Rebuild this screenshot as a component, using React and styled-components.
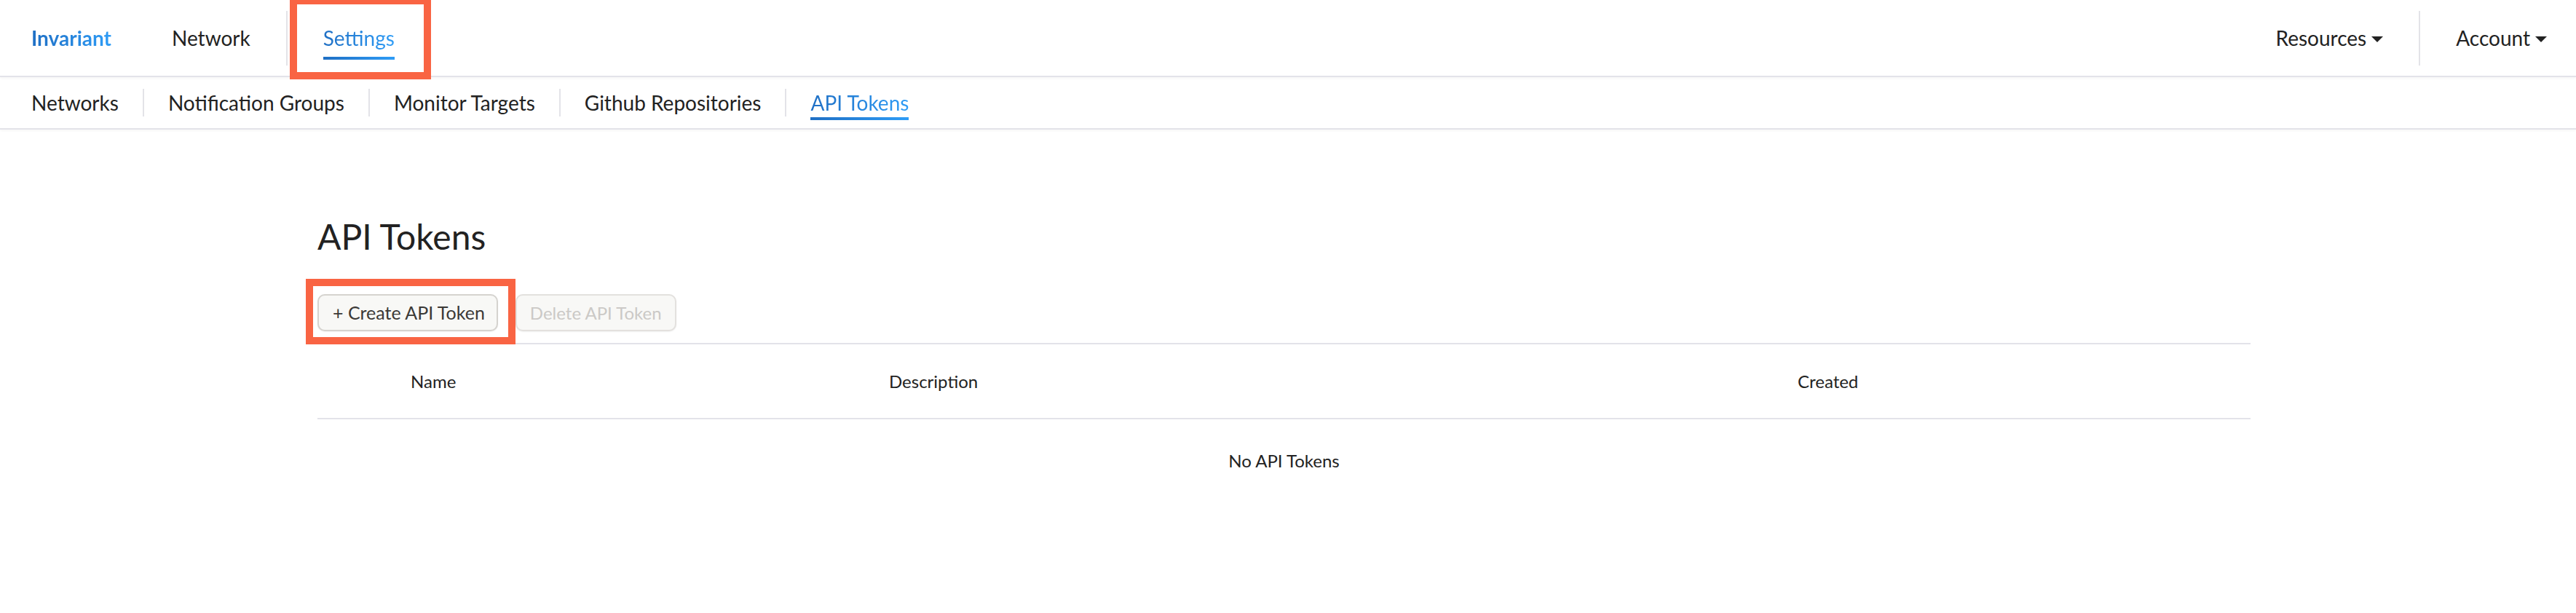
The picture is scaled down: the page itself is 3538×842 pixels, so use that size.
import React from 'react';
import styled, { createGlobalStyle } from 'styled-components';

const GlobalStyle = createGlobalStyle`
  html, body {
    margin: 0;
    padding: 0;
    background: #fff;
    font-family: Lato, "Open Sans", sans-serif;
    color: #222;
  }
`;

const Page = styled.div`
  min-height: 842px;
  background: #fff;
`;

const TopNav = styled.header`
  display: flex;
  align-items: center;
  height: 104px;
  padding: 0 40px 0 43px;
  border-bottom: 2px solid #e3e3e9;
  box-shadow: 0 2px 3px rgba(0, 0, 0, 0.03);
`;

const Brand = styled.div`
  font-size: 28px;
  font-weight: 700;
  background: linear-gradient(90deg, #1f6fc4, #2e9cf6);
  -webkit-background-clip: text;
  background-clip: text;
  color: transparent;
  margin-right: 83px;
`;

const NavGroup = styled.nav`
  display: flex;
  align-items: center;
  gap: 49px;
  height: 100%;
  margin-left: ${(p) => (p.$right ? 'auto' : '0')};
`;

const NavDivider = styled.span`
  width: 2px;
  height: ${(p) => p.$h}px;
  background: #e3e3e8;
`;

const NavLink = styled.a`
  position: relative;
  display: flex;
  align-items: center;
  gap: 7px;
  font-size: 28px;
  color: ${(p) => (p.$active ? 'transparent' : '#222')};
  background: ${(p) => (p.$active ? 'linear-gradient(90deg, #1f6fc4, #2e9cf6)' : 'none')};
  -webkit-background-clip: text;
  background-clip: text;
  text-decoration: none;
  cursor: pointer;

  &::after {
    content: '';
    display: ${(p) => (p.$active ? 'block' : 'none')};
    position: absolute;
    left: 0;
    right: 0;
    bottom: ${(p) => p.$lineOffset}px;
    height: 4px;
    background: linear-gradient(90deg, #1f6fc4, #2e9cf6);
  }
`;

const Caret = styled.span`
  width: 0;
  height: 0;
  margin-top: 4px;
  border-left: 8px solid transparent;
  border-right: 8px solid transparent;
  border-top: 8px solid #222;
`;

const SubNav = styled.nav`
  display: flex;
  align-items: center;
  gap: 33px;
  height: 70px;
  padding-left: 43px;
  border-bottom: 2px solid #e3e3e9;
  box-shadow: 0 2px 3px rgba(0, 0, 0, 0.03);
`;

const Highlight = styled.span`
  position: absolute;
  top: ${(p) => p.$t}px;
  bottom: ${(p) => p.$b}px;
  left: ${(p) => p.$l}px;
  right: ${(p) => p.$r}px;
  border: 10px solid #f96443;
  pointer-events: none;
`;

const Content = styled.main`
  width: 2655px;
  margin: 118px 0 0 436px;
`;

const Title = styled.h1`
  margin: 0;
  font-size: 48px;
  font-weight: 400;
  line-height: 1.2;
  color: #222;
`;

const Toolbar = styled.div`
  display: flex;
  gap: 24px;
  margin-top: 50px;
`;

const ButtonWrap = styled.div`
  position: relative;
`;

const Button = styled.button`
  height: 51px;
  padding: 0 ${(p) => (p.$wide ? 16 : 18)}px 0 ${(p) => (p.$wide ? 19 : 18)}px;
  border: 2px solid ${(p) => (p.disabled ? '#e3e1de' : '#d5d3cf')};
  border-radius: 10px;
  background: #f8f8f6;
  box-shadow: 0 1px 2px rgba(0, 0, 0, 0.06);
  font-family: Lato, sans-serif;
  font-size: ${(p) => (p.$wide ? 25 : 24)}px;
  color: ${(p) => (p.disabled ? '#cbc9c6' : '#3b3936')};
  cursor: ${(p) => (p.disabled ? 'default' : 'pointer')};
`;

const Table = styled.div`
  margin-top: 16px;
  border-top: 2px solid #e3e3e9;
`;

const HeaderRow = styled.div`
  display: grid;
  grid-template-columns: 128px 657px 1248px 1fr;
  align-items: center;
  height: 101px;
  border-bottom: 2px solid #e3e3e9;
  font-size: 24px;
  color: #222;
`;

const Empty = styled.div`
  padding: 42px 0;
  text-align: center;
  font-size: 24px;
  color: #222;
`;

const subItems = ['Networks', 'Notification Groups', 'Monitor Targets', 'Github Repositories', 'API Tokens'];

const App = () => {
  return (
    <Page>
      <GlobalStyle />
      <TopNav>
        <Brand>Invariant</Brand>
        <NavGroup>
          <NavLink>Network</NavLink>
          <NavDivider $h={75} />
          <NavLink $active $lineOffset={-13}>
            Settings
            <Highlight $t={-39} $b={-40} $l={-46} $r={-50} />
          </NavLink>
        </NavGroup>
        <NavGroup $right>
          <NavLink>
            Resources <Caret />
          </NavLink>
          <NavDivider $h={75} />
          <NavLink>
            Account <Caret />
          </NavLink>
        </NavGroup>
      </TopNav>

      <SubNav>
        {subItems.map((item, i) => (
          <React.Fragment key={item}>
            {i > 0 && <NavDivider $h={38} />}
            <NavLink $active={item === 'API Tokens'} $lineOffset={-7}>
              {item}
            </NavLink>
          </React.Fragment>
        ))}
      </SubNav>

      <Content>
        <Title>API Tokens</Title>
        <Toolbar>
          <ButtonWrap>
            <Button $wide>+ Create API Token</Button>
            <Highlight $t={-21} $b={-18} $l={-16} $r={-24} />
          </ButtonWrap>
          <Button disabled>Delete API Token</Button>
        </Toolbar>
        <Table>
          <HeaderRow>
            <span />
            <span>Name</span>
            <span>Description</span>
            <span>Created</span>
          </HeaderRow>
          <Empty>No API Tokens</Empty>
        </Table>
      </Content>
    </Page>
  );
};

export default App;
